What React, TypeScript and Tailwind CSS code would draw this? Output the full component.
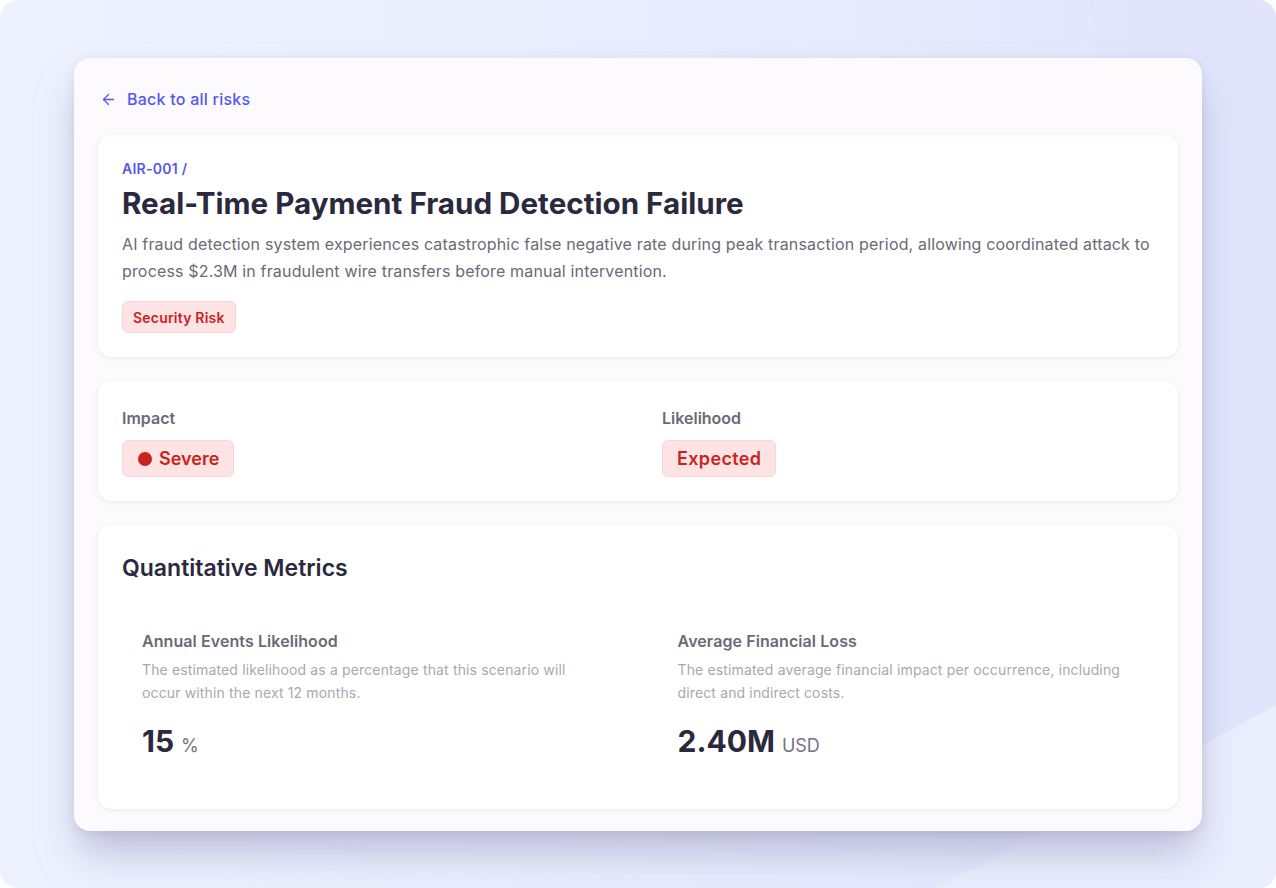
import { ArrowLeft } from 'lucide-react';

interface MetricProps {
  title: string;
  description: string;
  value: string;
  unit: string;
}

function Metric({ title, description, value, unit }: MetricProps) {
  return (
    <div className="px-5 pt-[19px] pb-4">
      <h3 className="text-[16px] leading-6 font-semibold text-[#6b6a75] tracking-[0.005em]">{title}</h3>
      <p className="mt-[5px] text-[14px] leading-[23px] text-[#a9a8b1] tracking-[0.01em]">{description}</p>
      <div className="mt-[17px] flex items-baseline gap-[7px]">
        <span className="text-[30px] leading-10 font-bold text-[#2a293d]">{value}</span>
        <span className="text-[18px] text-[#75747f]">{unit}</span>
      </div>
    </div>
  );
}

export default function App() {
  return (
    <div className="bg-white min-h-[888px] w-full" style={{ fontFamily: 'Inter, "Noto Sans", sans-serif' }}>
      <div className="relative min-h-[888px] w-full rounded-[18px] overflow-hidden bg-gradient-to-r from-[#eef2fe] via-[#eaedfd] to-[#e2e5fb]">
        <svg className="absolute inset-0 w-full h-full" viewBox="0 0 1276 888" preserveAspectRatio="none">
          <polygon points="1090,0 1276,0 1276,705 1202,745" fill="#dfe3fb" opacity="0.5" />
          <polygon points="900,908 1276,705 1276,888 900,888" fill="#ebeefd" />
        </svg>
        <div className="relative pt-[58px] pl-[74px] pr-[74px]">
          <div className="rounded-[16px] bg-[#fcfafd] px-6 pt-[29px] pb-[22px] shadow-[0_26px_40px_-6px_rgba(150,154,190,0.6),0_2px_8px_rgba(160,164,196,0.3)]">
            <a href="#" className="flex items-center gap-[10px] text-[#5457f0] text-[16px] leading-6 font-medium tracking-[0.015em] w-fit">
              <ArrowLeft className="w-[17px] h-[17px] ml-[2px]" strokeWidth={1.8} />
              Back to all risks
            </a>

            <div className="mt-[24px] flex flex-col gap-6">
              <section className="rounded-[14px] bg-white px-6 pt-[24px] pb-[24px] shadow-[0_1px_4px_rgba(200,200,220,0.35)]">
                <div className="text-[14px] leading-5 font-semibold text-[#5457f0] tracking-[0.02em]">AIR-001 /</div>
                <h1 className="mt-[6px] text-[29.6px] leading-9 font-bold text-[#2a293d]">
                  Real-Time Payment Fraud Detection Failure
                </h1>
                <p className="mt-[10px] text-[16px] leading-[27px] text-[#6b6a75] tracking-[0.01em]">
                  AI fraud detection system experiences catastrophic false negative rate during peak transaction period, allowing coordinated attack to process $2.3M in fraudulent wire transfers before manual intervention.
                </p>
                <span className="mt-[16px] inline-flex items-center h-[32px] px-[10px] rounded-[6px] bg-[#fde3e3] border border-[#fcd3d3] text-[14px] font-semibold text-[#c8231c] tracking-[0.015em]">
                  Security Risk
                </span>
              </section>

              <section className="rounded-[14px] bg-white px-6 pt-[25px] pb-[24px] shadow-[0_1px_4px_rgba(200,200,220,0.35)]">
                <div className="grid grid-cols-2 gap-[48px]">
                  <div>
                    <div className="text-[16px] leading-6 font-semibold text-[#6b6a75]">Impact</div>
                    <span className="mt-[10px] inline-flex items-center gap-[7px] h-[37px] pl-[15px] pr-[14px] rounded-[6px] bg-[#fde3e3] border border-[#fcd5d5] text-[18px] font-semibold text-[#c8231c]">
                      <span className="w-[14px] h-[14px] rounded-full bg-[#c8231c]" />
                      Severe
                    </span>
                  </div>
                  <div>
                    <div className="text-[16px] leading-6 font-semibold text-[#6b6a75]">Likelihood</div>
                    <span className="mt-[10px] inline-flex items-center h-[37px] px-[14px] rounded-[6px] bg-[#fde3e3] border border-[#fcd5d5] text-[18px] font-semibold text-[#c8231c] tracking-[0.02em]">
                      Expected
                    </span>
                  </div>
                </div>
              </section>

              <section className="rounded-[14px] bg-white px-6 pt-[27px] pb-[32px] shadow-[0_1px_4px_rgba(200,200,220,0.35)]">
                <h2 className="text-[23px] leading-8 font-semibold text-[#2a293d]">Quantitative Metrics</h2>
                <div className="mt-[26px] grid grid-cols-2 gap-[39px]">
                  <Metric
                    title="Annual Events Likelihood"
                    description="The estimated likelihood as a percentage that this scenario will occur within the next 12 months."
                    value="15"
                    unit="%"
                  />
                  <Metric
                    title="Average Financial Loss"
                    description="The estimated average financial impact per occurrence, including direct and indirect costs."
                    value="2.40M"
                    unit="USD"
                  />
                </div>
              </section>
            </div>
          </div>
        </div>
      </div>
    </div>
  );
}
